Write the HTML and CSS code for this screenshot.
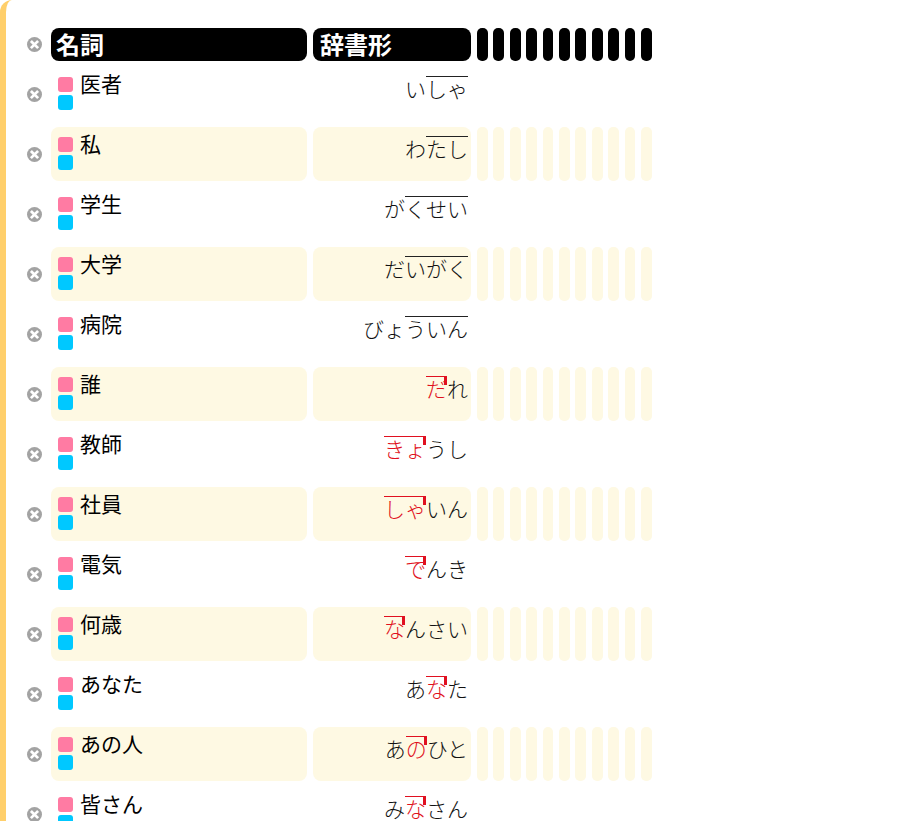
FILE: index.html
```html
<!DOCTYPE html>
<html lang="ja">
<head>
<meta charset="utf-8">
<title>名詞</title>
<link rel="stylesheet" href="styles.css">
</head>
<body>
<svg class="defs" width="0" height="0" aria-hidden="true">
  <symbol id="x" viewBox="0 0 16 16">
    <circle cx="8" cy="8" r="8" fill="#a3a3a3"/>
    <path d="M5.2 5.2l5.6 5.6M10.8 5.2l-5.6 5.6" stroke="#fff" stroke-width="3" stroke-linecap="square" fill="none"/>
  </symbol>
</svg>
<main class="page">
  <div class="row head">
    <svg class="del"><use href="#x"/></svg>
    <div class="cell name">名詞</div>
    <div class="cell read">辞書形</div>
    <div class="bars"><i></i><i></i><i></i><i></i><i></i><i></i><i></i><i></i><i></i><i></i><i></i></div>
  </div>

  <div class="row">
    <svg class="del"><use href="#x"/></svg>
    <div class="cell name"><span class="tags"><b class="pink"></b><b class="blue"></b></span><span class="word">医者</span></div>
    <div class="cell read">い<span class="hi">しゃ</span></div>
    <div class="bars"><i></i><i></i><i></i><i></i><i></i><i></i><i></i><i></i><i></i><i></i><i></i></div>
  </div>
  <div class="row alt">
    <svg class="del"><use href="#x"/></svg>
    <div class="cell name"><span class="tags"><b class="pink"></b><b class="blue"></b></span><span class="word">私</span></div>
    <div class="cell read">わ<span class="hi">たし</span></div>
    <div class="bars"><i></i><i></i><i></i><i></i><i></i><i></i><i></i><i></i><i></i><i></i><i></i></div>
  </div>
  <div class="row">
    <svg class="del"><use href="#x"/></svg>
    <div class="cell name"><span class="tags"><b class="pink"></b><b class="blue"></b></span><span class="word">学生</span></div>
    <div class="cell read">が<span class="hi">くせい</span></div>
    <div class="bars"><i></i><i></i><i></i><i></i><i></i><i></i><i></i><i></i><i></i><i></i><i></i></div>
  </div>
  <div class="row alt">
    <svg class="del"><use href="#x"/></svg>
    <div class="cell name"><span class="tags"><b class="pink"></b><b class="blue"></b></span><span class="word">大学</span></div>
    <div class="cell read">だ<span class="hi">いがく</span></div>
    <div class="bars"><i></i><i></i><i></i><i></i><i></i><i></i><i></i><i></i><i></i><i></i><i></i></div>
  </div>
  <div class="row">
    <svg class="del"><use href="#x"/></svg>
    <div class="cell name"><span class="tags"><b class="pink"></b><b class="blue"></b></span><span class="word">病院</span></div>
    <div class="cell read">びょ<span class="hi">ういん</span></div>
    <div class="bars"><i></i><i></i><i></i><i></i><i></i><i></i><i></i><i></i><i></i><i></i><i></i></div>
  </div>
  <div class="row alt">
    <svg class="del"><use href="#x"/></svg>
    <div class="cell name"><span class="tags"><b class="pink"></b><b class="blue"></b></span><span class="word">誰</span></div>
    <div class="cell read"><span class="drop">だ</span>れ</div>
    <div class="bars"><i></i><i></i><i></i><i></i><i></i><i></i><i></i><i></i><i></i><i></i><i></i></div>
  </div>
  <div class="row">
    <svg class="del"><use href="#x"/></svg>
    <div class="cell name"><span class="tags"><b class="pink"></b><b class="blue"></b></span><span class="word">教師</span></div>
    <div class="cell read"><span class="drop">きょ</span>うし</div>
    <div class="bars"><i></i><i></i><i></i><i></i><i></i><i></i><i></i><i></i><i></i><i></i><i></i></div>
  </div>
  <div class="row alt">
    <svg class="del"><use href="#x"/></svg>
    <div class="cell name"><span class="tags"><b class="pink"></b><b class="blue"></b></span><span class="word">社員</span></div>
    <div class="cell read"><span class="drop">しゃ</span>いん</div>
    <div class="bars"><i></i><i></i><i></i><i></i><i></i><i></i><i></i><i></i><i></i><i></i><i></i></div>
  </div>
  <div class="row">
    <svg class="del"><use href="#x"/></svg>
    <div class="cell name"><span class="tags"><b class="pink"></b><b class="blue"></b></span><span class="word">電気</span></div>
    <div class="cell read"><span class="drop">で</span>んき</div>
    <div class="bars"><i></i><i></i><i></i><i></i><i></i><i></i><i></i><i></i><i></i><i></i><i></i></div>
  </div>
  <div class="row alt">
    <svg class="del"><use href="#x"/></svg>
    <div class="cell name"><span class="tags"><b class="pink"></b><b class="blue"></b></span><span class="word">何歳</span></div>
    <div class="cell read"><span class="drop">な</span>んさい</div>
    <div class="bars"><i></i><i></i><i></i><i></i><i></i><i></i><i></i><i></i><i></i><i></i><i></i></div>
  </div>
  <div class="row">
    <svg class="del"><use href="#x"/></svg>
    <div class="cell name"><span class="tags"><b class="pink"></b><b class="blue"></b></span><span class="word">あなた</span></div>
    <div class="cell read">あ<span class="drop">な</span>た</div>
    <div class="bars"><i></i><i></i><i></i><i></i><i></i><i></i><i></i><i></i><i></i><i></i><i></i></div>
  </div>
  <div class="row alt">
    <svg class="del"><use href="#x"/></svg>
    <div class="cell name"><span class="tags"><b class="pink"></b><b class="blue"></b></span><span class="word">あの人</span></div>
    <div class="cell read">あ<span class="drop">の</span>ひと</div>
    <div class="bars"><i></i><i></i><i></i><i></i><i></i><i></i><i></i><i></i><i></i><i></i><i></i></div>
  </div>
  <div class="row">
    <svg class="del"><use href="#x"/></svg>
    <div class="cell name"><span class="tags"><b class="pink"></b><b class="blue"></b></span><span class="word">皆さん</span></div>
    <div class="cell read">み<span class="drop">な</span>さん</div>
    <div class="bars"><i></i><i></i><i></i><i></i><i></i><i></i><i></i><i></i><i></i><i></i><i></i></div>
  </div>
</main>
</body>
</html>
```
FILE: styles.css
```css
html, body {
  margin: 0;
  height: 100%;
  overflow: hidden;
  background: #fff;
}
.defs {
  position: absolute;
}
.page {
  box-sizing: border-box;
  min-height: 100%;
  padding: 28px 0 0 21px;
  border-left: 6px solid #ffcf6b;
  border-top-left-radius: 12px;
  font-family: "Noto Sans CJK JP", sans-serif;
  color: #000;
  display: flex;
  flex-direction: column;
  gap: 6px;
}
.row {
  display: flex;
  align-items: stretch;
  gap: 6px;
  height: 54px;
}
.row.head {
  height: 33px;
}
.del {
  width: 15px;
  height: 15px;
  flex: none;
  align-self: center;
  margin-right: 3px;
}
.cell {
  box-sizing: border-box;
  border-radius: 8px;
  flex: none;
}
.name {
  width: 256px;
  display: flex;
  gap: 7px;
  padding: 10px 0 0 7px;
}
.read {
  width: 158px;
  padding: 9px 3px 0 0;
  text-align: right;
  font-size: 21px;
  font-weight: 300;
  line-height: 23px;
  white-space: nowrap;
  color: #111;
}
.tags {
  display: flex;
  flex-direction: column;
  gap: 3px;
}
.tags b {
  display: block;
  width: 15px;
  height: 15px;
  border-radius: 3px;
}
.pink {
  background: #ff7ba3;
}
.blue {
  background: #00c8ff;
}
.word {
  font-size: 21px;
  line-height: 12px;
}
.hi {
  display: inline-block;
  border-top: 1px solid #222;
  line-height: 23px;
}
.drop {
  position: relative;
  display: inline-block;
  border-top: 1px solid #e01020;
  line-height: 23px;
  color: #e01020;
}
.drop::after {
  content: "";
  position: absolute;
  top: -1px;
  right: 0;
  width: 3px;
  height: 9px;
  background: #e01020;
}
.bars {
  display: flex;
  gap: 5.5px;
}
.bars i {
  display: block;
  width: 10.9px;
  border-radius: 5px;
}
.alt .cell,
.alt .bars i {
  background: #fef9e3;
}
.head .cell {
  background: #000;
  color: #fff;
  font-size: 24px;
  font-weight: 700;
  line-height: 31px;
  padding: 0 0 0 5px;
  text-align: left;
}
.head .read {
  padding-left: 7px;
}
.head .bars i {
  background: #000;
}
```
